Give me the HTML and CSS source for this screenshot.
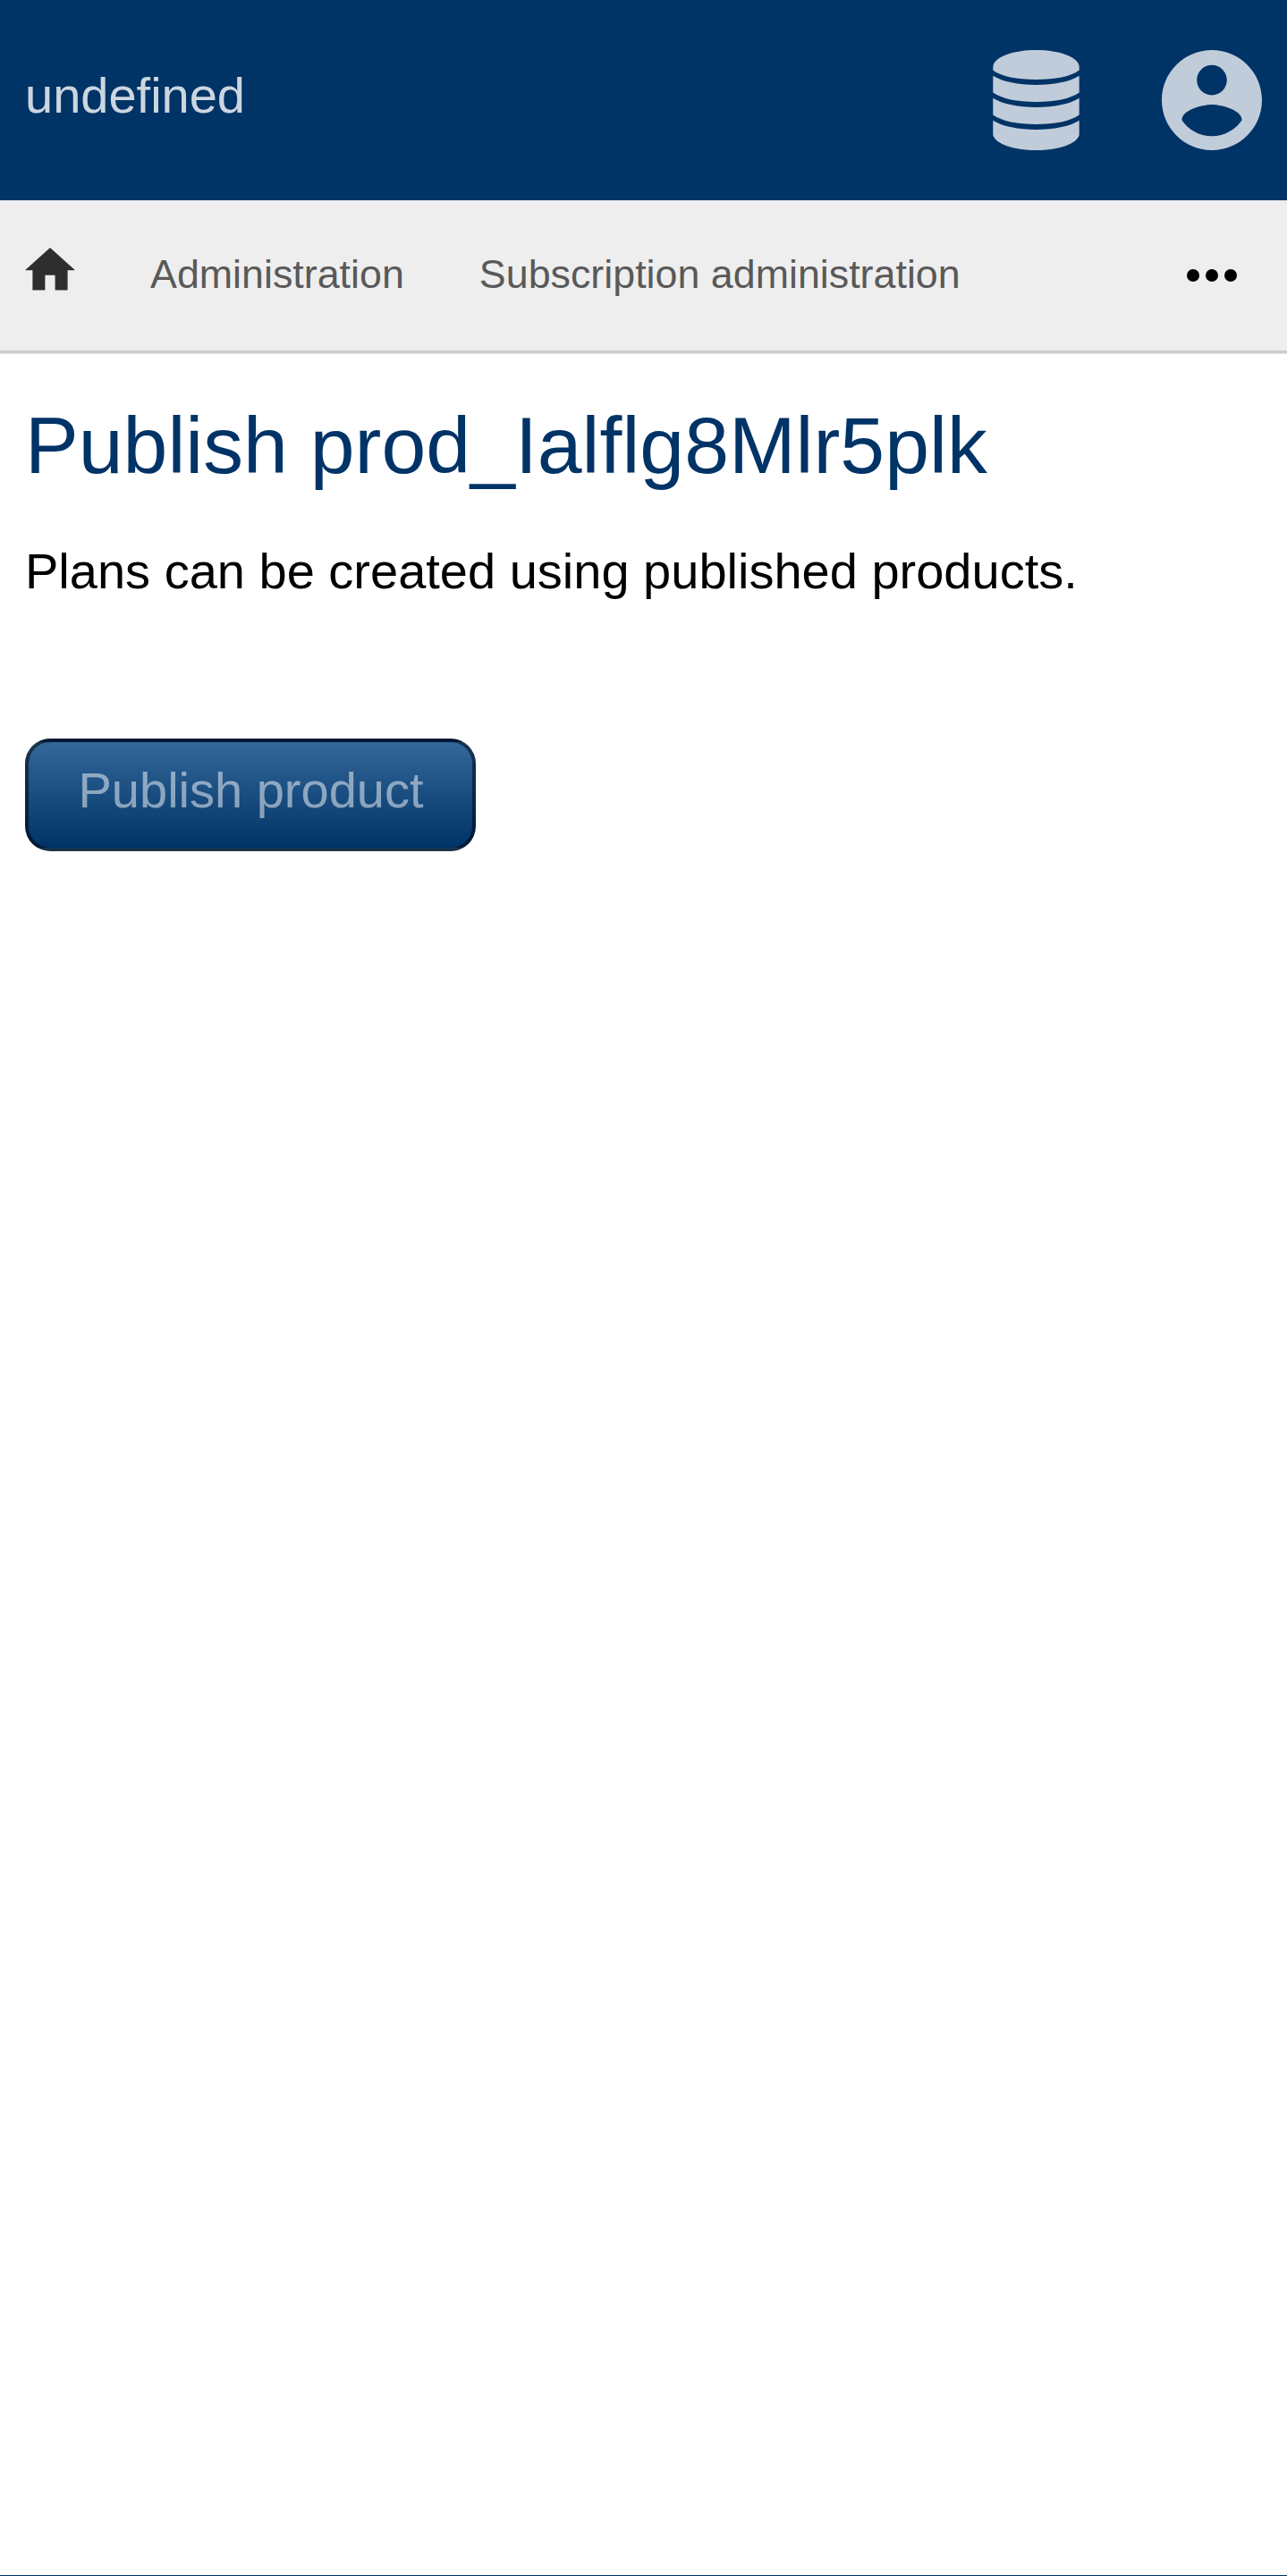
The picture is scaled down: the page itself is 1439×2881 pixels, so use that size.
FILE: index.html
```html
<!DOCTYPE html>
<html lang="en">
<head>
<meta charset="utf-8">
<title>Publish product</title>
<link rel="stylesheet" href="styles.css">
</head>
<body>
<header class="header">
  <a class="brand">undefined</a>
  <div class="menus">
    <svg class="icon-db" viewBox="0 0 97 112" fill="currentColor"><path d="M48.500 0C75 0 96.700 8 96.700 19V22.500C88 29.500 69 33 48.500 33S9 29.500.3 22.500V19C.3 8 22 0 48.500 0Z"/><path id="band" d="M.3 28.800C11 35.500 29 39 48.500 39S86 35.500 96.700 28.800V47.500C87 54.500 69 58 48.500 58S10 54.500.3 47.500Z"/><use href="#band" y="25"/><path d="M.3 78.800C11 85.500 29 89 48.500 89S86 85.500 96.700 78.800V95C94 105 74 112 48.500 112S3 105 .3 95Z"/></svg>
    <svg class="icon-user" viewBox="2 2 20 20" fill="currentColor"><path d="M12 2C6.480 2 2 6.480 2 12s4.480 10 10 10 10-4.480 10-10S17.520 2 12 2zm0 3c1.660 0 3 1.340 3 3s-1.340 3-3 3-3-1.340-3-3 1.340-3 3-3zm0 14.200c-2.500 0-4.710-1.280-6-3.220.03-1.990 4-3.080 6-3.080 1.990 0 5.970 1.090 6 3.080-1.290 1.940-3.500 3.220-6 3.220z"/></svg>
  </div>
</header>
<nav class="nav">
  <svg class="icon-home" viewBox="2 3 20 17" fill="currentColor"><path d="M10 20v-6h4v6h5v-8h3L12 3 2 12h3v8z"/></svg>
  <a class="nav-link">Administration</a>
  <a class="nav-link">Subscription administration</a>
  <svg class="icon-more" viewBox="0 0 56 14"><circle cx="7" cy="7" r="7"/><circle cx="28" cy="7" r="7"/><circle cx="49" cy="7" r="7"/></svg>
</nav>
<main class="content">
  <h1 class="title">Publish prod_Ialflg8Mlr5plk</h1>
  <p class="text">Plans can be created using published products.</p>
  <button class="submit" type="submit">Publish product</button>
</main>
</body>
</html>
```
FILE: styles.css
```css
* { box-sizing: border-box; }
body {
  margin: 0;
  height: 2881px;
  display: flex;
  flex-direction: column;
  font: 56px/84px "Liberation Sans", Arial, sans-serif;
  color: #000;
  background: #fff;
  border-bottom: 1px solid #036;
}
.header {
  height: 224px;
  flex: none;
  display: flex;
  justify-content: space-between;
  padding: 56px 28px;
  background: #036;
}
.brand { margin-top: 8.500px; color: rgba(255, 255, 255, .8); }
.menus { display: flex; gap: 92px; color: #c0ccd9; }
.icon-db { width: 97px; height: 112px; }
.icon-user { width: 112px; height: 112px; }
.nav {
  height: 171px;
  flex: none;
  display: flex;
  align-items: flex-start;
  padding: 53px 56px 0 28px;
  background: #eee;
  border-bottom: 3px solid #ccc;
  box-shadow: 0 1px #e5e5e5;
  font-size: 44.800px;
  line-height: 59px;
  color: #595959;
}
.icon-home { width: 56px; height: 47.600px; color: #2e2e2e; }
.nav-link { margin-left: 84px; }
.icon-more { width: 56px; height: 14px; margin: 24px 0 0 auto; fill: #000; }
.content { flex: 1; padding: 47px 28px 0; }
.title { margin: 0; font-size: 89.600px; font-weight: 400; line-height: 112px; color: #036; }
.text { margin: 42.500px 0 0; }
.submit {
  display: block;
  margin-top: 145.500px;
  height: 126px;
  width: 504px;
  padding: 0 0 11px 1px;
  font: inherit;
  color: rgba(255, 255, 255, .5);
  border: 4px solid rgba(0, 0, 0, .5);
  border-radius: 28px;
  background: linear-gradient(#369, #036);
}
```
